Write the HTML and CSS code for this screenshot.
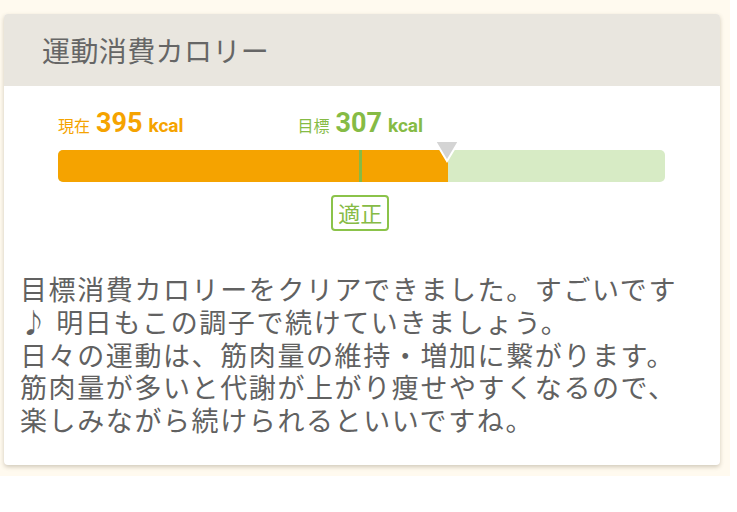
FILE: index.html
```html
<!DOCTYPE html>
<html lang="ja">
<head>
<meta charset="utf-8">
<link rel="stylesheet" href="styles.css">
</head>
<body>
<div class="wrap">
  <div class="card">
    <div class="card-head">運動消費カロリー</div>
    <div class="card-body">
      <div class="gauge">
        <div class="labels">
          <div class="lbl cur"><span class="k">現在</span><span class="num">395</span><span class="unit">kcal</span></div>
          <div class="lbl tgt" style="left: 49.8%"><span class="k">目標</span><span class="num">307</span><span class="unit">kcal</span></div>
        </div>
        <div class="bar">
          <div class="fill" style="width: 64.25%"></div>
          <div class="mark" style="left: 49.6%"></div>
          <svg class="tri" style="left: 64.25%" width="28" height="25" viewBox="0 0 28 25"><polygon points="2,2 26,2 14,22" fill="#d4d4d4" stroke="#fff" stroke-width="2" stroke-linejoin="miter"/></svg>
        </div>
        <div class="badge-row">
          <span class="badge" style="left: 49.8%">適正</span>
        </div>
      </div>
      <p class="msg">目標消費カロリーをクリアできました。すごいです♪ 明日もこの調子で続けていきましょう。<br>日々の運動は、筋肉量の維持・増加に繋がります。筋肉量が多いと代謝が上がり痩せやすくなるので、楽しみながら続けられるといいですね。</p>
    </div>
  </div>
</div>
</body>
</html>
```

FILE: styles.css
```css
html, body {
  margin: 0;
  padding: 0;
  background: #ffffff;
}
body {
  font-family: Roboto, "Noto Sans CJK JP", sans-serif;
  color: #666666;
}
.wrap {
  width: 730px;
  background: #fffaef;
  padding: 14px 10px 11px 4px;
  box-sizing: border-box;
}
.card {
  background: #ffffff;
  border-radius: 4px;
  box-shadow: 0 2px 4px rgba(90, 80, 50, 0.28);
  overflow: hidden;
}
.card-head {
  height: 72px;
  background: #e9e6df;
  display: flex;
  align-items: center;
  padding-left: 38px;
  font-family: "Noto Sans CJK JP", sans-serif;
  font-size: 28px;
  letter-spacing: 0.4px;
  color: #666666;
}
.card-body {
  padding: 0 16px 28px 16px;
}
.gauge {
  margin: 0 39px 0 38px;
  padding-top: 24px;
}
.labels {
  position: relative;
  height: 26px;
}
.lbl {
  position: absolute;
  top: 0;
  white-space: nowrap;
  display: flex;
  align-items: baseline;
}
.lbl.cur { left: 0; color: #f5a300; }
.lbl.tgt { transform: translateX(-50%); color: #86bb45; }
.lbl .k {
  font-family: "Noto Sans CJK JP", sans-serif;
  font-size: 16px;
  margin-right: 6px;
}
.lbl .num {
  font-weight: 700;
  font-size: 27px;
  line-height: 26px;
  margin-right: 6px;
}
.lbl .unit {
  font-weight: 700;
  font-size: 19px;
}
.bar {
  position: relative;
  margin-top: 14px;
  height: 32px;
  border-radius: 5px;
  background: #d7ebc5;
}
.fill {
  height: 100%;
  background: #f5a300;
  border-radius: 5px 0 0 5px;
}
.mark {
  position: absolute;
  top: 0;
  width: 3px;
  height: 100%;
  background: #86bb45;
}
.tri {
  position: absolute;
  top: -11px;
  margin-left: -15px;
}
.badge-row {
  position: relative;
  height: 36px;
  margin-top: 13px;
}
.badge {
  position: absolute;
  top: 0;
  transform: translateX(-50%);
  box-sizing: border-box;
  height: 36px;
  padding: 0 5px;
  border: 2px solid #8bc34a;
  border-radius: 4px;
  color: #86bb45;
  font-family: "Noto Sans CJK JP", sans-serif;
  font-size: 22px;
  line-height: 31px;
}
.msg {
  margin: 42px 20px 0 0;
  font-family: "Noto Sans CJK JP", sans-serif;
  font-size: 27px;
  letter-spacing: 1.6px;
  line-height: 32.75px;
  color: #616161;
}
```
